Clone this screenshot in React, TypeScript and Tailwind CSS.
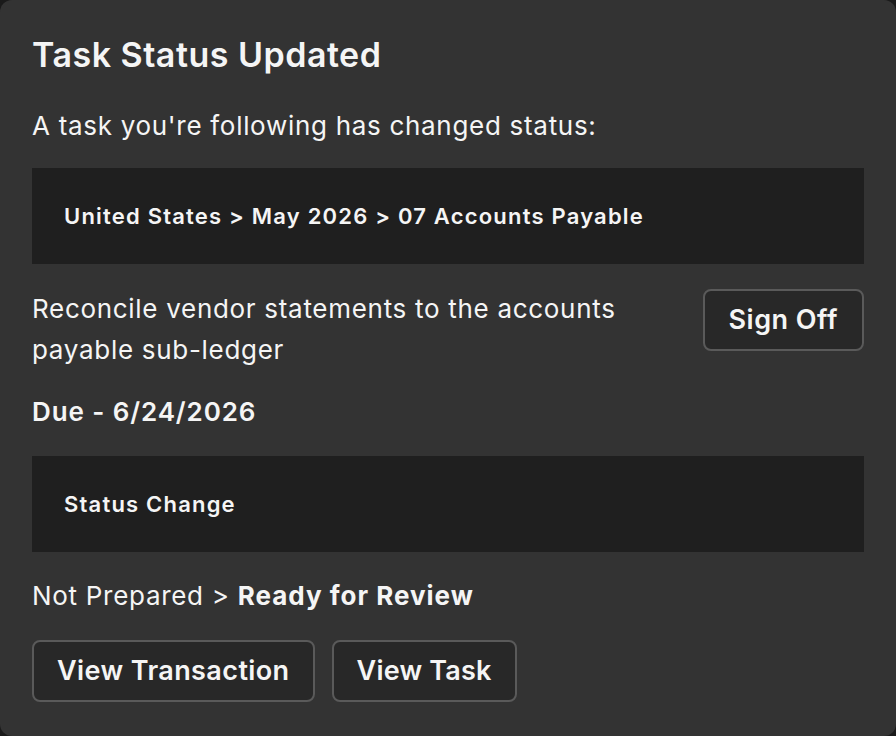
import React from "react";

export default function App() {
  return (
    <div className="w-[896px] h-[736px] bg-[#1a1a1a]" style={{ fontFamily: "Inter, 'Noto Sans', sans-serif" }}>
      <div className="w-full h-full rounded-[12px] bg-[#333333] px-8 pt-8 text-[#f5f5f5] flex flex-col">
        <h1 className="text-[34px] leading-[46px] font-semibold tracking-[0.5px]">Task Status Updated</h1>
        <p className="mt-7 text-[26px] leading-[40px] tracking-[0.7px]">A task you're following has changed status:</p>
        <div className="mt-[22px] h-[96px] bg-[#1f1f1f] flex items-center px-8">
          <span className="text-[22px] font-semibold tracking-[1.2px]">United States &gt; May 2026 &gt; 07 Accounts Payable</span>
        </div>
        <div className="mt-6 flex items-start justify-between">
          <p className="text-[26px] leading-[41px] tracking-[0.7px] w-[640px]">Reconcile vendor statements to the accounts payable sub-ledger</p>
          <button className="mt-px h-[62px] px-6 rounded-[8px] border-2 border-[#5a5a5a] bg-[#282828] text-[27px] font-semibold tracking-[0.5px]">Sign Off</button>
        </div>
        <p className="mt-[22px] text-[26px] leading-[40px] font-semibold tracking-[0.9px]">Due - 6/24/2026</p>
        <div className="mt-6 h-[96px] bg-[#1f1f1f] flex items-center px-8">
          <span className="text-[22px] font-semibold tracking-[1.2px]">Status Change</span>
        </div>
        <p className="mt-6 text-[26px] leading-[40px] tracking-[0.7px]">Not Prepared &gt; <span className="font-bold tracking-[1px]">Ready for Review</span></p>
        <div className="mt-6 flex gap-[17px]">
          <button className="h-[62px] px-[23px] rounded-[8px] border-2 border-[#5a5a5a] bg-[#282828] text-[27px] font-semibold tracking-[0.4px]">View Transaction</button>
          <button className="h-[62px] px-[23px] rounded-[8px] border-2 border-[#5a5a5a] bg-[#282828] text-[27px] font-semibold tracking-[0.2px]">View Task</button>
        </div>
      </div>
    </div>
  );
}
